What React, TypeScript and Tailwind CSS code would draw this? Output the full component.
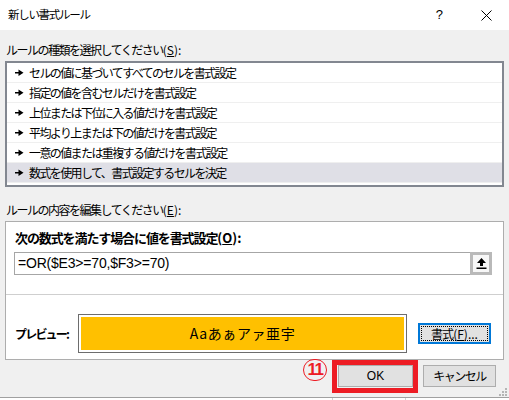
import React from 'react';

const ruleTypes = [
  'セルの値に基づいてすべてのセルを書式設定',
  '指定の値を含むセルだけを書式設定',
  '上位または下位に入る値だけを書式設定',
  '平均より上または下の値だけを書式設定',
  '一意の値または重複する値だけを書式設定',
  '数式を使用して、書式設定するセルを決定',
];

const RuleArrow = () => (
  <svg width="9" height="7" viewBox="0 0 9 7" className="shrink-0">
    <rect x="0" y="3" width="4" height="1.5" fill="#000" />
    <path d="M3.5 0.5 L8.5 3.75 L3.5 7 Z" fill="#000" />
  </svg>
);

const UploadIcon = () => (
  <svg width="11" height="13" viewBox="0 0 11 13">
    <path d="M5.5 1 L10 6 H7 V9 H4 V6 H1 Z" fill="#000" />
    <rect x="0.5" y="10.5" width="10" height="1.5" fill="#000" />
  </svg>
);

const CloseIcon = () => (
  <svg width="11" height="11" viewBox="0 0 11 11">
    <path d="M0.5 0.5 L10.5 10.5 M10.5 0.5 L0.5 10.5" stroke="#000" strokeWidth="1" />
  </svg>
);

// mnemonic like "(S):" written without the tight kana tracking
const Key = ({ k, tail = ':' }: { k: string; tail?: string }) => (
  <span className="tracking-normal">
    (<span className="underline">{k}</span>){tail}
  </span>
);

export default function App() {
  return (
    <div className="relative w-[509px] h-[400px] overflow-hidden bg-[#f0f0f0] text-black font-['Noto_Sans_CJK_JP',sans-serif]">
      {/* Title bar */}
      <div className="h-[30px] bg-white flex items-center pl-[8px]">
        <span className="text-[11.5px] tracking-[-1.3px]">新しい書式ルール</span>
        <span className="ml-auto text-[13px] font-['Liberation_Sans',sans-serif] mr-[38px]">?</span>
        <span className="mr-[17px] flex items-center">
          <CloseIcon />
        </span>
      </div>

      <div className="px-[5px]">
        {/* Rule type */}
        <div className="mt-[12px] h-[16px] leading-[16px] pl-[1px] text-[12px] tracking-[-1.5px]">
          ルールの種類を選択してください<Key k="S" />
        </div>
        <div className="mt-[3px] h-[126px] border-2 border-[#828790] bg-white">
          {ruleTypes.map((t, i) => (
            <div
              key={t}
              className={`h-[20px] flex items-center gap-[5px] pl-[8px] border-b border-[#efefef] ${
                i === ruleTypes.length - 1 ? 'bg-[#dfdfe6]' : ''
              }`}
            >
              <RuleArrow />
              <span className="text-[12px] tracking-[-1.6px] leading-[20px]">{t}</span>
            </div>
          ))}
        </div>

        {/* Rule content */}
        <div className="mt-[15px] h-[16px] leading-[16px] pl-[1px] text-[12px] tracking-[-1.5px]">
          ルールの内容を編集してください<Key k="E" />
        </div>
        <div className="mt-[3px] border border-[#adadad] bg-white">
          <div className="pt-[8px] pl-[9px] h-[24px] leading-[16px] text-[13px] font-bold tracking-[-1.1px]">
            次の数式を満たす場合に値を書式設定<Key k="O" />
          </div>
          <div className="mt-[6px] ml-[8px] mr-[11px] h-[23px] flex border border-[#a6a6a6]">
            <div className="flex-1 pl-[3px] flex items-center text-[14px] tracking-[-0.2px] font-['Liberation_Sans',sans-serif]">
              =OR($E3&gt;=70,$F3&gt;=70)
            </div>
            <div className="-my-[1px] -mr-[1px] w-[22px] border-[3px] border-[#b9b9b9] bg-[#f7f7f7] flex items-center justify-center">
              <UploadIcon />
            </div>
          </div>
          <div className="mt-[19px] h-px bg-[#cfcfcf]" />
          <div className="mt-[19px] mb-[6px] flex items-center pl-[9px]">
            <div className="w-[63px] text-[12px] font-bold tracking-[-1.8px]">
              プレビュー<span className="tracking-normal">:</span>
            </div>
            <div className="w-[329px] h-[39px] border border-[#6d6d6d] p-[2px]">
              <div className="h-full bg-[#ffc000] flex items-center justify-center text-[14px] tracking-[0.6px]">
                Aaあぁアァ亜宇
              </div>
            </div>
            <div className="ml-[11px] w-[73px] h-[21px] border-2 border-[#0078d7] bg-[#e1e1e1] p-px">
              <div className="h-full border border-dotted border-black flex items-center justify-center text-[12px] tracking-[-1px]">
                書式<Key k="F" tail="..." />
              </div>
            </div>
          </div>
        </div>

        {/* Buttons */}
        <div className="flex items-start justify-end pr-[8px]">
          <div className="-mt-[1px] mr-[5px] w-[24px] h-[22px] rounded-full border border-[#ed1c24] flex items-center justify-center text-[#ed1c24] text-[17px] font-bold tracking-[-1.5px] font-['Liberation_Sans',sans-serif]">
            11
          </div>
          <div className="border-[5px] border-[#ed1c24] h-[33px] w-[86px] pl-px">
            <div className="h-[22px] border border-[#adadad] bg-[#e1e1e1] flex items-center justify-center text-[12px] font-['Liberation_Sans',sans-serif]">
              OK
            </div>
          </div>
          <div className="ml-[5px] mt-[5px] w-[73px] h-[22px] border border-[#adadad] bg-[#e1e1e1] flex items-center justify-center text-[12px] tracking-[-1.5px]">
            キャンセル
          </div>
        </div>
      </div>

      {/* Window bottom edge and sheet behind */}
      <div className="mt-[4px] h-px bg-[#a0a0a0]" />
      <div className="h-[2px] bg-white flex">
        <div className="w-[333px] border-r border-[#d4d4d4]" />
        <div className="w-[73px] border-r border-[#d4d4d4]" />
        <div className="flex-1" />
      </div>

      {/* Resize grip */}
      <div className="absolute right-[2px] bottom-[4px] grid grid-cols-3 gap-[1px]">
        <span className="w-[2px] h-[2px]" />
        <span className="w-[2px] h-[2px]" />
        <span className="w-[2px] h-[2px] bg-[#b5b5b5]" />
        <span className="w-[2px] h-[2px]" />
        <span className="w-[2px] h-[2px] bg-[#b5b5b5]" />
        <span className="w-[2px] h-[2px] bg-[#b5b5b5]" />
        <span className="w-[2px] h-[2px] bg-[#b5b5b5]" />
        <span className="w-[2px] h-[2px] bg-[#b5b5b5]" />
        <span className="w-[2px] h-[2px] bg-[#b5b5b5]" />
      </div>
    </div>
  );
}
